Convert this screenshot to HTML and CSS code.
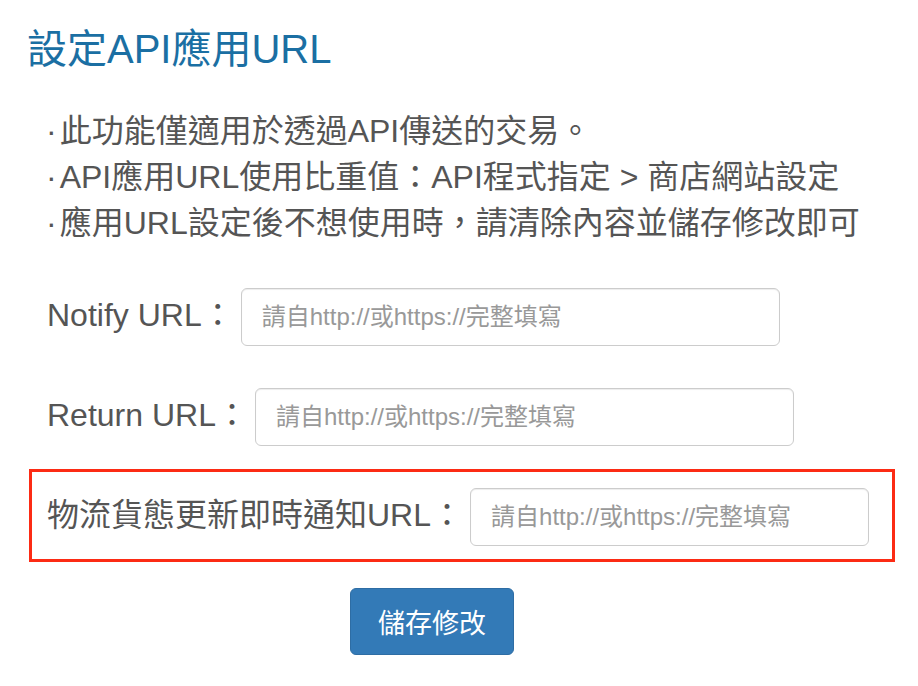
FILE: index.html
```html
<html>
<head>
    <link rel="stylesheet" href="styles.css">
</head>
<body>
    <div class="page">
        <h1 class="title">設定API應用URL</h1>

        <ul class="notes">
            <li><span class="dot">·</span>此功能僅適用於透過API傳送的交易。</li>
            <li><span class="dot">·</span>API應用URL使用比重值：API程式指定 &gt; 商店網站設定</li>
            <li><span class="dot">·</span>應用URL設定後不想使用時，請清除內容並儲存修改即可</li>
        </ul>

        <div class="form">
            <div class="field-row">
                <label class="field-label" for="notify">Notify URL：</label>
                <input class="field-input" id="notify" type="text" placeholder="請自http://或https://完整填寫">
            </div>
            <div class="field-row">
                <label class="field-label" for="return">Return URL：</label>
                <input class="field-input" id="return" type="text" placeholder="請自http://或https://完整填寫">
            </div>
            <div class="field-row highlight">
                <label class="field-label" for="logistics">物流貨態更新即時通知URL：</label>
                <input class="field-input short" id="logistics" type="text" placeholder="請自http://或https://完整填寫">
            </div>
        </div>

        <div class="actions">
            <button class="save-btn" type="button">儲存修改</button>
        </div>
    </div>
</body>
</html>
```

FILE: styles.css
```css
body {
    margin: 0;
    font-family: "Liberation Sans", "Noto Sans CJK TC", sans-serif;
    background-color: #ffffff;
    color: #555555;
}

.page {
    padding: 25px 23px 0 29px;
}

.title {
    margin: 0 0 0 -2px;
    font-size: 40px;
    line-height: 48px;
    font-weight: normal;
    color: #1b6fa3;
}

.notes {
    list-style: none;
    margin: 35px 0 0 0;
    padding: 0 0 0 17px;
    font-size: 32px;
    line-height: 46px;
}

.notes .dot {
    margin-right: 3px;
}

.form {
    display: flex;
    flex-direction: column;
    gap: 7px;
    margin-top: 23px;
}

.field-row {
    display: flex;
    align-items: center;
    gap: 7px;
    padding: 16px 15px 13px 15px;
    border: 3px solid transparent;
}

.field-row.highlight {
    border-color: #fc2b14;
}

.field-label {
    font-size: 32px;
    color: #555555;
    margin-bottom: 10px;
}

.field-input {
    width: 539px;
    height: 58px;
    box-sizing: border-box;
    padding: 0 20px;
    border: 1px solid #cccccc;
    border-radius: 6px;
    box-shadow: inset 0 1px 1px rgba(0, 0, 0, 0.075);
    font-family: "Liberation Sans", "Noto Sans CJK TC", sans-serif;
    font-size: 24px;
    color: #555555;
}

.field-input.short {
    width: 399px;
}

.field-input::placeholder {
    color: #999999;
}

.actions {
    margin-top: 26px;
    padding-left: 321px;
}

.save-btn {
    width: 164px;
    height: 67px;
    background-color: #337ab7;
    border: 1px solid #2e6da4;
    border-radius: 6px;
    color: #ffffff;
    font-family: "Liberation Sans", "Noto Sans CJK TC", sans-serif;
    font-size: 27px;
    cursor: pointer;
}
```
